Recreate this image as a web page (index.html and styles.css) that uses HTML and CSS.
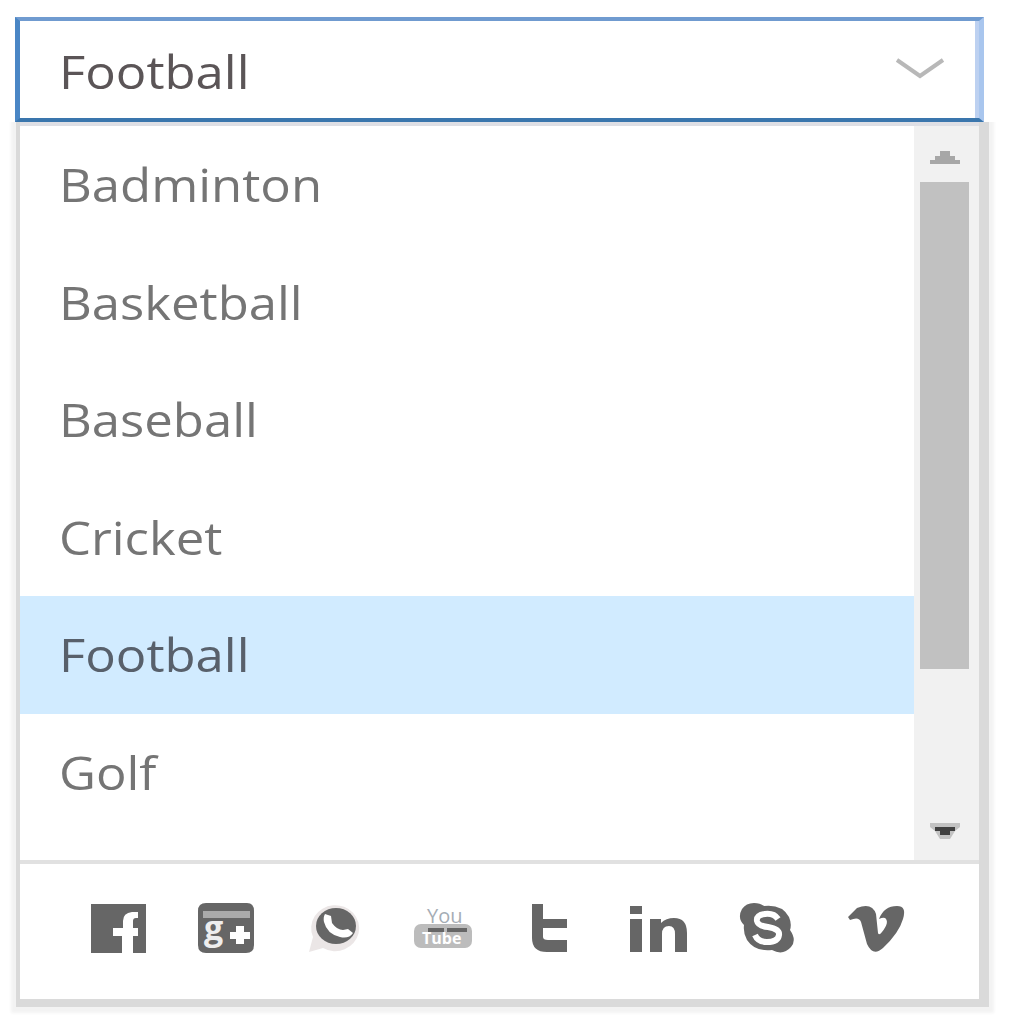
FILE: index.html
```html
<!DOCTYPE html>
<html lang="en">
<head>
<meta charset="utf-8">
<title>Sports</title>
<link rel="stylesheet" href="styles.css">
</head>
<body>
<main class="dropdown">
  <div class="field">
    <span class="label field-value">Football</span>
    <svg class="chevron" width="50" height="24" viewBox="0 0 50 24"><path d="M2 3 L25 19 L48 3"/></svg>
  </div>
  <div class="popup">
    <div class="list">
      <ul class="options">
        <li class="option"><span class="label">Badminton</span></li>
        <li class="option"><span class="label">Basketball</span></li>
        <li class="option"><span class="label">Baseball</span></li>
        <li class="option"><span class="label">Cricket</span></li>
        <li class="option selected"><span class="label">Football</span></li>
        <li class="option"><span class="label">Golf</span></li>
      </ul>
      <div class="scrollbar">
        <svg class="arrow up" width="30" height="13" viewBox="0 0 30 13"><path d="M0 13V9H5V5H10V0H20V5H25V9H30V13Z"/></svg>
        <div class="thumb"></div>
        <svg class="arrow down" width="30" height="16" viewBox="0 0 30 16"><path class="edge" d="M0 0H30V4L25 8L20 16H10L5 8L0 4Z"/><path d="M5 4H25V8H20V12H10V8H5Z"/></svg>
      </div>
    </div>
    <footer class="social">
      <svg class="icon" viewBox="0 0 60 52"><path d="M2 2H57V51H44V34H49V26H44V19Q44 16 47 16H49V10H43Q34 11 34 19V26H24V34H33V51H2Z"/></svg>
      <svg class="icon" viewBox="0 0 60 52"><path d="M9 1H50Q57 1 57 9V43Q57 51 49 51H9Q1 51 1 43V9Q1 1 9 1Z"/><path class="sheen" d="M6 9H53V16H6Z"/><text class="g-mark" x="7" y="38">g</text><path class="light" d="M39 24H47V30H53V37H47V42H39V37H33V30H39Z"/></svg>
      <svg class="icon" viewBox="0 0 60 52"><path class="bubble" d="M4 50L8 35A24 23 0 1 1 18 46Z"/><ellipse cx="31" cy="24" rx="20" ry="18"/><path class="light" d="M20 12L26 14L27 21Q32 28 38 28L43 27L48 31Q44 37 35 35Q22 32 19 20Q18 15 20 12Z"/></svg>
      <svg class="icon" viewBox="0 0 60 52"><text class="you" x="14" y="21">You</text><rect class="tube-body" x="1" y="22" width="58" height="24" rx="7"/><path d="M15 26H31V30H15ZM34 26H54V30H34Z"/><text class="tube" x="9" y="42">Tube</text></svg>
      <svg class="icon" viewBox="0 0 60 52"><path d="M11 2H22V17H46V26H22V35Q22 38 27 38H46V50H26Q11 50 11 36Z"/></svg>
      <svg class="icon" viewBox="0 0 60 52"><path d="M1 4H13V12H1ZM1 17H13V50H1ZM21 17H32V21Q37 16 45 16Q58 16 58 31V50H46V32Q46 24 40 24Q33 24 33 32V50H21Z"/></svg>
      <svg class="icon" viewBox="0 0 60 52"><path d="M17 1Q23 1 27 4Q45 2 52 15Q55 22 53 28Q60 38 54 45Q46 54 35 48Q18 50 10 38Q6 31 7 23Q0 16 5 7Q9 1 17 1Z"/><path class="skype-s" d="M41 17Q37 11 28 12Q19 13 20 19Q21 24 31 25Q43 27 42 33Q41 40 30 40Q21 40 18 33"/></svg>
      <svg class="icon" viewBox="0 0 60 52"><path d="M3 15L12 6Q27 0 31 12L33 31Q34 34 37 30Q45 20 40 16Q38 15 34 17Q39 4 52 4Q62 4 58 17Q54 31 38 46Q28 55 22 42L16 20Q14 14 5 18Z"/></svg>
    </footer>
  </div>
</main>
</body>
</html>
```
FILE: styles.css
```css
* { box-sizing: border-box; }
body {
  margin: 0;
  height: 1024px;
  overflow: hidden;
  background: #fff;
  font-family: "Open Sans", "Noto Sans", sans-serif;
  font-size: 46px;
  color: #757575;
}
.dropdown { padding: 17px 40px 0 15px; }
.label { display: inline-block; transform: scaleX(1.105); transform-origin: 0 50%; }
.field {
  display: flex;
  align-items: center;
  justify-content: space-between;
  height: 105px;
  padding: 0 34px 0 39px;
  border: solid #4a86c5;
  border-width: 4px 5px 4px 5px;
  border-top-color: #709bd0;
  border-bottom-color: #3a76ad;
  border-right-color: #a9c6ee;
  box-shadow: inset -4px 0 #bdd1f1;
  color: #5b5557;
}
.field-value { line-height: 97px; padding-top: 4px; }
.chevron { margin-bottom: 2px; }
.chevron path { fill: none; stroke: #b8b8b8; stroke-width: 4; }
.popup {
  width: 959px;
  margin-left: 5px;
  border-top: 4px solid #dedfe5;
  box-shadow: 3px 1px 0 7px #dadada, 3px 2px 3px 12px #f3f3f3;
  clip-path: inset(0 -18px -20px -15px);
  background: #fff;
}
.list { display: flex; height: 734px; overflow: hidden; }
.options { flex: 1; margin: 0; padding: 0; list-style: none; }
.option { height: 117.5px; padding-left: 39px; line-height: 117px; }
.selected { background: #d1ebff; color: #58606b; }
.scrollbar {
  display: flex;
  flex-direction: column;
  align-items: center;
  width: 65px;
  padding: 25px 4px 21px 0;
  background: #f1f1f1;
}
.thumb { width: 49px; height: 487px; margin-top: 18px; background: #c1c1c1; }
.up { fill: #a7a7a7; }
.down { margin-top: auto; fill: #404040; }
.edge { fill: #c2c2c2; }
.social {
  display: flex;
  gap: 48px;
  height: 139px;
  padding: 38px 0 0 69px;
  border-top: 4px solid #e1e1e1;
}
.icon { flex: none; width: 60px; height: 52px; fill: #666; overflow: visible; }
.light { fill: #fff; }
.sheen { fill: #aaa; }
.icon .bubble { fill: #ebe6e6; }
.g-mark { font-size: 34px; font-weight: 700; fill: #eee; }
.you { font-size: 20px; fill: #a5adb5; }
.tube-body { fill: #bcbcbc; }
.tube { font-size: 16px; font-weight: 700; fill: #fff; }
.skype-s { fill: none; stroke: #fff; stroke-width: 6; }
```
